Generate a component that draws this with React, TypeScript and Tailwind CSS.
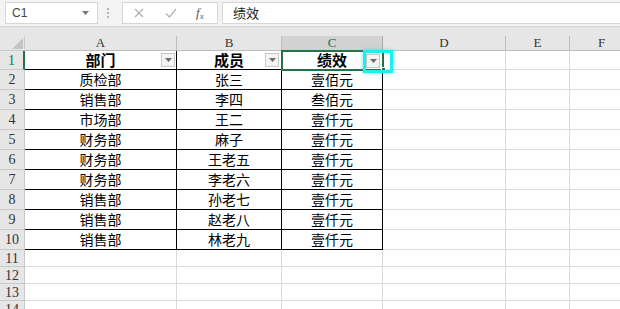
import React from "react";

type Row = { n: number; a: string; b: string; c: string };

const data: Row[] = [
  { n: 2, a: "质检部", b: "张三", c: "壹佰元" },
  { n: 3, a: "销售部", b: "李四", c: "叁佰元" },
  { n: 4, a: "市场部", b: "王二", c: "壹仟元" },
  { n: 5, a: "财务部", b: "麻子", c: "壹仟元" },
  { n: 6, a: "财务部", b: "王老五", c: "壹仟元" },
  { n: 7, a: "财务部", b: "李老六", c: "壹仟元" },
  { n: 8, a: "销售部", b: "孙老七", c: "壹仟元" },
  { n: 9, a: "销售部", b: "赵老八", c: "壹仟元" },
  { n: 10, a: "销售部", b: "林老九", c: "壹仟元" },
];

const cjk = "font-['Noto_Sans_CJK_SC','Noto_Sans',sans-serif]";
const serif = "font-['Liberation_Serif',serif]";

function FilterButton() {
  return (
    <div className="w-[14px] h-[14px] bg-[#f4f4f4] border border-[#c6c6c6] flex items-center justify-center">
      <svg width="7" height="4" viewBox="0 0 7 4">
        <polygon points="0,0 7,0 3.5,4" fill="#6b6b6b" />
      </svg>
    </div>
  );
}

function RowHead({ n, active, h }: { n: number; active?: boolean; h: string }) {
  return (
    <div
      className={
        active
          ? `${h} bg-[#e6e6e6] border-b border-[#c8c8c8] border-r-2 border-r-[#217346] flex items-center justify-center text-[14px] text-[#217346] ${serif}`
          : `${h} bg-[#e6e6e6] border-b border-r border-[#c8c8c8] flex items-center justify-center text-[14px] text-[#333] ${serif}`
      }
    >
      {n}
    </div>
  );
}

function Cell({ children, h }: { children?: React.ReactNode; h: string }) {
  return (
    <div
      className={`${h} border-b border-r border-black flex items-center justify-center text-[14px] text-black ${cjk}`}
    >
      {children}
    </div>
  );
}

function Blank({ h }: { h: string }) {
  return <div className={`${h} border-b border-r border-[#dadada] bg-white`} />;
}

export default function App() {
  return (
    <div className="w-[620px] h-[309px] overflow-hidden bg-white select-none">
      {/* formula bar */}
      <div className="h-[27px] bg-[#f3f3f3] border-b border-[#d4d4d4] flex items-center">
        <div className="ml-[5px] w-[93px] h-[22px] bg-white border border-[#d6d6d6] flex items-center justify-between pl-[6px] pr-[8px]">
          <span className="text-[12px] text-[#444] font-['Liberation_Sans',sans-serif]">C1</span>
          <svg width="7" height="4" viewBox="0 0 7 4">
            <polygon points="0,0 7,0 3.5,4" fill="#777" />
          </svg>
        </div>
        <div className="ml-[7px] w-[6px] flex flex-col items-center gap-[2px]">
          <div className="w-[2px] h-[2px] bg-[#b4b4b4]" />
          <div className="w-[2px] h-[2px] bg-[#b4b4b4]" />
          <div className="w-[2px] h-[2px] bg-[#b4b4b4]" />
        </div>
        <div className="ml-[11px] w-[96px] h-[22px] bg-white border border-[#d6d6d6] flex items-center">
          <svg className="ml-[11px]" width="10" height="10" viewBox="0 0 10 10">
            <path d="M1 1 L9 9 M9 1 L1 9" stroke="#b0b0b0" strokeWidth="1.2" />
          </svg>
          <svg className="ml-[21px]" width="12" height="10" viewBox="0 0 12 10">
            <path d="M1 5.5 L4.5 9 L11 1" stroke="#b0b0b0" strokeWidth="1.2" fill="none" />
          </svg>
          <span className={`ml-[19px] text-[13px] italic text-[#555] ${serif}`}>
            f<span className="text-[9px] align-[-2px]">x</span>
          </span>
        </div>
        <div className="ml-[4px] flex-1 h-[22px] bg-white border border-r-0 border-[#d6d6d6] flex items-center pl-[10px]">
          <span className={`text-[13px] text-[#222] ${cjk}`}>绩效</span>
        </div>
      </div>
      <div className="h-[9px] bg-[#e6e6e6]" />

      {/* sheet */}
      <div className="relative grid grid-cols-[25px_152px_105px_101px_123px_64px_64px]">
        {/* column headers */}
        <div className="h-[15px] bg-[#e6e6e6] border-b border-r border-[#c8c8c8] flex items-end justify-end pr-[1px] pb-[1px]">
          <svg width="11" height="11" viewBox="0 0 11 11">
            <polygon points="11,0 11,11 0,11" fill="#c4c4c4" />
          </svg>
        </div>
        {["A", "B"].map((l) => (
          <div
            key={l}
            className={`h-[15px] bg-[#e6e6e6] border-b border-r border-[#bdbdbd] flex items-center justify-center text-[13px] text-[#333] ${serif}`}
          >
            {l}
          </div>
        ))}
        <div
          className={`h-[15px] bg-[#d2d2d2] border-b border-r border-[#a8a8a8] flex items-center justify-center text-[13px] text-[#217346] ${serif}`}
        >
          C
        </div>
        {["D", "E", "F"].map((l) => (
          <div
            key={l}
            className={`h-[15px] bg-[#e6e6e6] border-b border-r border-[#bdbdbd] flex items-center justify-center text-[13px] text-[#333] ${serif}`}
          >
            {l}
          </div>
        ))}

        {/* row 1: headers with filters */}
        <RowHead n={1} active h="h-[19px]" />
        <div className={`h-[19px] border-b border-r border-black relative flex items-center justify-center text-[15px] font-bold text-black ${cjk}`}>
          部门
          <div className="absolute right-[1px] top-[2px]">
            <FilterButton />
          </div>
        </div>
        <div className={`h-[19px] border-b border-r border-black relative flex items-center justify-center text-[15px] font-bold text-black ${cjk}`}>
          成员
          <div className="absolute right-[2px] top-[2px]">
            <FilterButton />
          </div>
        </div>
        <div className={`h-[19px] border-b border-r border-black relative flex items-center justify-center text-[15px] font-bold text-black ${cjk}`}>
          绩效
          <div className="absolute right-[2px] top-[3px]">
            <FilterButton />
          </div>
        </div>
        <Blank h="h-[19px]" />
        <Blank h="h-[19px]" />
        <Blank h="h-[19px]" />

        {data.map((r) => (
          <React.Fragment key={r.n}>
            <RowHead n={r.n} h="h-[20px]" />
            <Cell h="h-[20px]">{r.a}</Cell>
            <Cell h="h-[20px]">{r.b}</Cell>
            <Cell h="h-[20px]">{r.c}</Cell>
            <Blank h="h-[20px]" />
            <Blank h="h-[20px]" />
            <Blank h="h-[20px]" />
          </React.Fragment>
        ))}

        {[11, 12, 13, 14].map((n) => (
          <React.Fragment key={n}>
            <RowHead n={n} h="h-[17px]" />
            <Blank h="h-[17px]" />
            <Blank h="h-[17px]" />
            <Blank h="h-[17px]" />
            <Blank h="h-[17px]" />
            <Blank h="h-[17px]" />
            <Blank h="h-[17px]" />
          </React.Fragment>
        ))}

        {/* active cell C1 */}
        <div className="absolute left-[281px] top-[14px] w-[103px] h-[21px] border-2 border-[#217346] pointer-events-none" />
        <div className="absolute left-[381px] top-[31px] w-[5px] h-[5px] bg-[#217346] border border-white" />
        {/* highlight around the filter button */}
        <div className="absolute left-[363px] top-[14px] w-[30px] h-[23px] border-[3px] border-[#19f0f0] shadow-[0_0_4px_rgba(0,200,220,0.6)] pointer-events-none" />
      </div>
    </div>
  );
}
